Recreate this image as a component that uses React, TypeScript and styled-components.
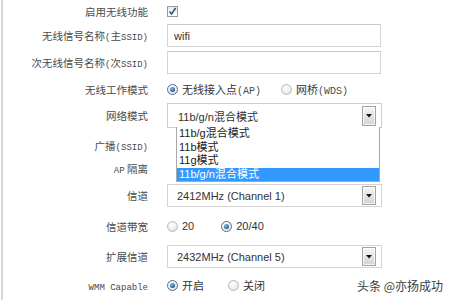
import React from 'react';
import styled, { createGlobalStyle } from 'styled-components';

const Global = createGlobalStyle`
  html, body { margin: 0; padding: 0; background: #ffffff; }
  body {
    width: 450px; height: 300px; overflow: hidden;
    font-family: "Liberation Sans", "Noto Sans CJK SC", sans-serif;
  }
`;

const Page = styled.div`
  position: relative;
  width: 449px;
  height: 300px;
  margin-left: 1px;
  border-left: 2px solid #d6d6d6;
  box-sizing: border-box;
  display: flex;
  flex-direction: column;
  overflow: hidden;
`;

const Row = styled.div<{ $h: number; $mt?: number }>`
  display: flex;
  align-items: center;
  flex-shrink: 0;
  height: ${(p) => p.$h}px;
  margin-top: ${(p) => p.$mt ?? 0}px;
`;

const Label = styled.div`
  width: 145px;
  flex-shrink: 0;
  text-align: right;
  white-space: nowrap;
  font-family: "Noto Sans CJK SC", sans-serif;
  font-size: 10.5px;
  color: #4a4a4a;
`;

const Mono = styled.span<{ $size?: number }>`
  font-family: "Liberation Mono", monospace;
  font-size: ${(p) => p.$size ?? 9}px;
  color: #4a4a4a;
`;

const Field = styled.div`
  position: relative;
  margin-left: 19px;
  width: 215px;
  height: 100%;
  display: flex;
  align-items: center;
`;

const CheckBox = styled.span`
  width: 11px;
  height: 11px;
  box-sizing: border-box;
  border: 1px solid #9a9a9a;
  background: linear-gradient(#e9e9e9, #ffffff);
  display: flex;
  align-items: center;
  justify-content: center;
`;

const TextBox = styled.input`
  width: 214px;
  height: 23px;
  box-sizing: border-box;
  border: 1px solid #d4d4d4;
  border-top-color: #c8c8c8;
  padding: 0 0 0 6px;
  margin: 0;
  outline: none;
  background: #fff;
  font-family: "Liberation Sans", "Noto Sans CJK SC", sans-serif;
  font-size: 11px;
  color: #333;
`;

const SelectBox = styled.div<{ $h: number; $focus?: boolean }>`
  position: relative;
  width: 215px;
  height: ${(p) => p.$h}px;
  box-sizing: border-box;
  border: 1px solid ${(p) => (p.$focus ? '#dccf9f' : '#d4d4d4')};
  background: #fff;
  display: flex;
  align-items: center;
  padding-left: ${(p) => (p.$focus ? 10 : 9)}px;
  font-family: "Liberation Sans", "Noto Sans CJK SC", sans-serif;
  font-size: 11px;
  color: #333;
`;

const SelectText = styled.span`
  flex: 1;
  white-space: nowrap;
`;

const ArrowBtn = styled.span<{ $h: number }>`
  width: 14px;
  height: ${(p) => p.$h}px;
  margin-right: 5px;
  box-sizing: border-box;
  border: 1px solid #a3a3a3;
  background: linear-gradient(#f6f6f6, #d3d3d3);
  box-shadow: inset 0 0 0 1px rgba(255, 255, 255, 0.7);
  display: flex;
  align-items: center;
  justify-content: center;
`;

const DropList = styled.div`
  position: absolute;
  top: 100%;
  left: 8px;
  right: 1px;
  z-index: 5;
  background: #fff;
  border: 1px solid #a8a8a8;
  border-top: none;
  font-family: "Liberation Sans", "Noto Sans CJK SC", sans-serif;
  font-size: 11px;
  color: #222;
`;

const DropItem = styled.div<{ $sel?: boolean }>`
  height: 13.5px;
  line-height: 13.5px;
  padding-left: 2px;
  white-space: nowrap;
  background: ${(p) => (p.$sel ? '#3399ff' : 'transparent')};
  color: ${(p) => (p.$sel ? '#ffffff' : '#222')};
`;

const RadioGroup = styled.div<{ $gap: number }>`
  display: flex;
  align-items: center;
  gap: ${(p) => p.$gap}px;
`;

const Option = styled.label`
  display: flex;
  align-items: center;
  gap: 4px;
  white-space: nowrap;
  font-family: "Noto Sans CJK SC", sans-serif;
  font-size: 11px;
  color: #333;
`;

const Num = styled.span`
  font-family: "Liberation Sans", sans-serif;
  font-size: 11px;
  color: #333;
`;

const RadioDot = styled.span<{ $on?: boolean }>`
  position: relative;
  width: 11px;
  height: 11px;
  flex-shrink: 0;
  box-sizing: border-box;
  border-radius: 50%;
  border: 1px solid ${(p) => (p.$on ? '#4d6f94' : '#b9b9b9')};
  background: radial-gradient(circle at 40% 35%, #ffffff 0%, #ececec 60%, #d2d2d2 100%);
  &::after {
    content: '';
    display: ${(p) => (p.$on ? 'block' : 'none')};
    position: absolute;
    left: 2px;
    top: 2px;
    width: 5px;
    height: 5px;
    border-radius: 50%;
    background: radial-gradient(circle at 40% 35%, #8dc0ea 0%, #2a67a3 60%, #163e6b 100%);
  }
`;

const Watermark = styled.div`
  position: absolute;
  right: 7px;
  top: 277px;
  font-family: "Noto Sans CJK SC", sans-serif;
  font-size: 12px;
  color: #3a3a3a;
  white-space: nowrap;
  text-shadow: 0 0 2px #fff;
`;

const Arrow = () => (
  <svg width="6" height="4" viewBox="0 0 6 4">
    <path d="M0 0 H6 L3 3.5 Z" fill="#111" />
  </svg>
);

const Check = () => (
  <svg width="9" height="9" viewBox="0 0 9 9">
    <path d="M1.5 4.5 L3.6 7 L7.6 1" fill="none" stroke="#2e4f86" strokeWidth="1.5" />
  </svg>
);

const Radio = ({ on, children }: { on?: boolean; children: React.ReactNode }) => (
  <Option>
    <RadioDot $on={on} />
    {children}
  </Option>
);

export default function App() {
  return (
    <>
      <Global />
      <Page>
        <Row $h={22}>
          <Label>启用无线功能</Label>
          <Field>
            <CheckBox>
              <Check />
            </CheckBox>
          </Field>
        </Row>
        <Row $h={27}>
          <Label>
            无线信号名称<Mono>(</Mono>主<Mono>SSID)</Mono>
          </Label>
          <Field>
            <TextBox value="wifi" readOnly />
          </Field>
        </Row>
        <Row $h={26}>
          <Label>
            次无线信号名称<Mono>(</Mono>次<Mono>SSID)</Mono>
          </Label>
          <Field>
            <TextBox value="" readOnly />
          </Field>
        </Row>
        <Row $h={28}>
          <Label>无线工作模式</Label>
          <Field>
            <RadioGroup $gap={20}>
              <Radio on>
                <span>
                  无线接入点<Mono $size={10}>(AP)</Mono>
                </span>
              </Radio>
              <Radio>
                <span>
                  网桥<Mono $size={10}>(WDS)</Mono>
                </span>
              </Radio>
            </RadioGroup>
          </Field>
        </Row>
        <Row $h={25}>
          <Label>网络模式</Label>
          <Field>
            <SelectBox $h={25} $focus>
              <SelectText>11b/g/n混合模式</SelectText>
              <ArrowBtn $h={20}>
                <Arrow />
              </ArrowBtn>
              <DropList>
                <DropItem>11b/g混合模式</DropItem>
                <DropItem>11b模式</DropItem>
                <DropItem>11g模式</DropItem>
                <DropItem $sel>11b/g/n混合模式</DropItem>
              </DropList>
            </SelectBox>
          </Field>
        </Row>
        <Row $h={24} $mt={5}>
          <Label>
            广播<Mono>(SSID)</Mono>
          </Label>
        </Row>
        <Row $h={22}>
          <Label>
            <Mono>AP</Mono> 隔离
          </Label>
        </Row>
        <Row $h={23} $mt={5}>
          <Label>信道</Label>
          <Field>
            <SelectBox $h={23}>
              <SelectText>2412MHz (Channel 1)</SelectText>
              <ArrowBtn $h={19}>
                <Arrow />
              </ArrowBtn>
            </SelectBox>
          </Field>
        </Row>
        <Row $h={38}>
          <Label>信道带宽</Label>
          <Field>
            <RadioGroup $gap={27}>
              <Radio>
                <Num>20</Num>
              </Radio>
              <Radio on>
                <Num>20/40</Num>
              </Radio>
            </RadioGroup>
          </Field>
        </Row>
        <Row $h={23}>
          <Label>扩展信道</Label>
          <Field>
            <SelectBox $h={23}>
              <SelectText>2432MHz (Channel 5)</SelectText>
              <ArrowBtn $h={19}>
                <Arrow />
              </ArrowBtn>
            </SelectBox>
          </Field>
        </Row>
        <Row $h={34}>
          <Label>
            <Mono>WMM Capable</Mono>
          </Label>
          <Field>
            <RadioGroup $gap={24}>
              <Radio on>开启</Radio>
              <Radio>关闭</Radio>
            </RadioGroup>
          </Field>
        </Row>
        <Watermark>头条 @亦扬成功</Watermark>
      </Page>
    </>
  );
}
